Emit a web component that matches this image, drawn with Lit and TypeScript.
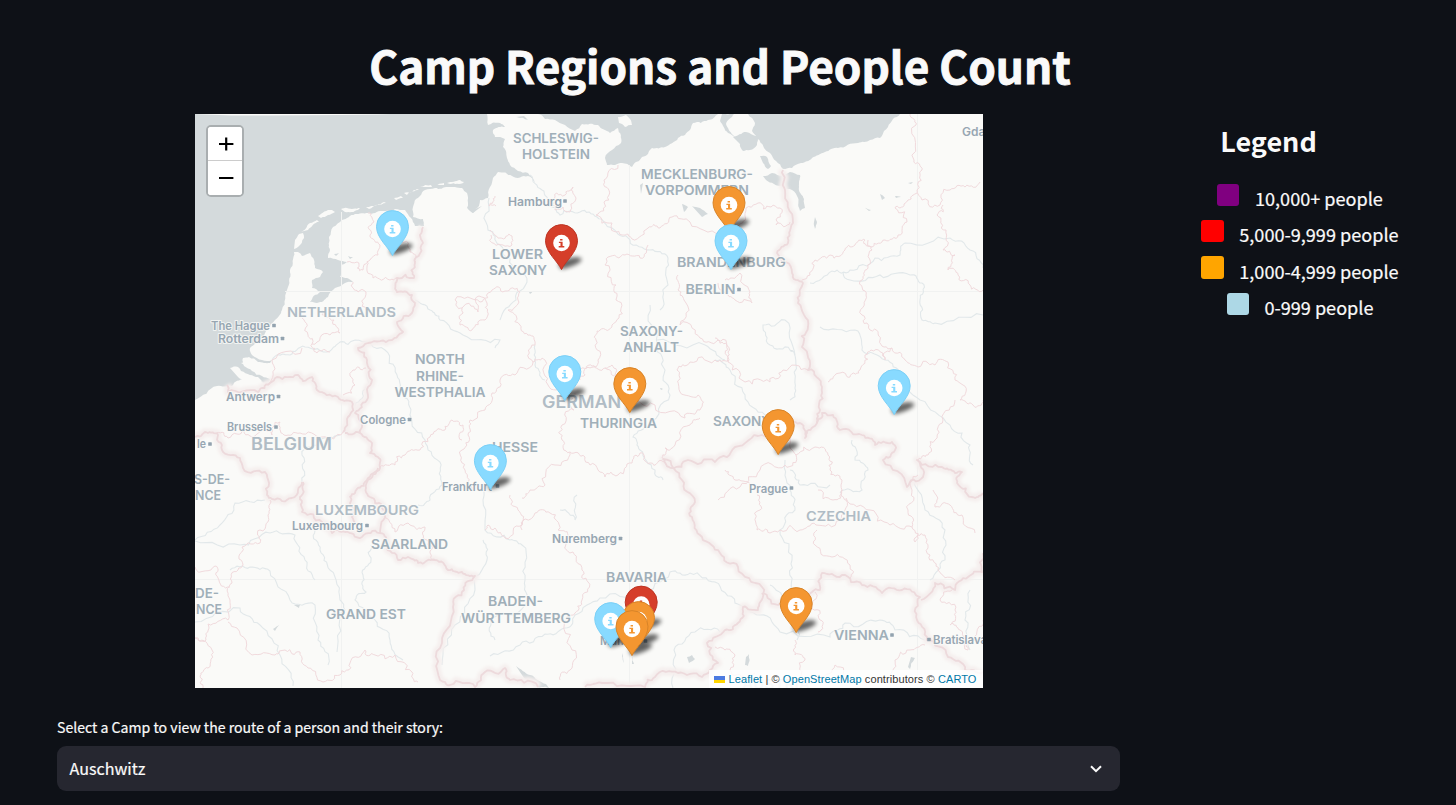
import { LitElement, html, svg, css } from "lit";
import { customElement } from "lit/decorators.js";

type Pt = [number, number];

// Deterministic midpoint displacement gives lines a natural, uneven course.
function rough(src: string, amp: number, seed = 7, close = false): string {
  const n = src.trim().split(/[\s,]+/).map(Number);
  let pts: Pt[] = [];
  for (let i = 0; i < n.length; i += 2) pts.push([n[i], n[i + 1]]);
  let s = seed;
  const rnd = () => {
    s = (s * 16807) % 2147483647;
    return s / 2147483647 - 0.5;
  };
  for (let k = 0; k < 5; k++) rnd();
  for (let pass = 0; pass < 3; pass++) {
    const out: Pt[] = [];
    for (let i = 0; i < pts.length - 1; i++) {
      const [ax, ay] = pts[i];
      const [bx, by] = pts[i + 1];
      out.push(pts[i]);
      const d = Math.hypot(bx - ax, by - ay);
      if (d > 3) {
        const k = rnd() * Math.min(d, 14) * amp;
        out.push([(ax + bx) / 2 - ((by - ay) / d) * k, (ay + by) / 2 + ((bx - ax) / d) * k]);
      }
    }
    out.push(pts[pts.length - 1]);
    pts = out;
  }
  return "M" + pts.map((p) => p[0].toFixed(1) + " " + p[1].toFixed(1)).join("L") + (close ? "Z" : "");
}

const WATER = [
  "195,114 487,114 488,125 500,123 505,127 493,130 495,137 505,139 503,147 507,158 510,165 518,171 528,173 535,182 528,176 512,176 498,172 493,178 490,187 488,198 480,200 479,206 473,213 467,208 468,203 467,193 462,188 448,187 435,188 425,190 420,196 416,199 413,207 413,217 423,219 424,226 415,226 411,218 405,210 395,209 382,211 368,213 355,214 342,220 333,227 329,237 330,250 328,258 338,260 347,262 341,265 340,277 353,282 345,283 335,288 328,297 317,303 310,302 320,292 312,288 312,280 320,277 323,272 315,268 314,260 310,253 302,256 298,252 294,252 290,270 288,287 282,310 275,320 262,338 250,348 252,355 262,360 272,360 270,363 258,362 249,357 243,358 244,366 252,371 262,376 270,379 268,384 256,380 244,378 232,386 217,386 195,400",
  "538,114 545,119 555,120 565,125 575,131 582,124 598,125 610,133 618,128 621,143 612,150 605,158 607,165 615,165 622,163 632,167 642,157 652,148 665,147 678,138 685,135 693,123 708,120 718,114",
  "748,114 755,123 752,131 757,138 764,148 770,153 776,161 783,169 792,168 801,163 812,158 825,152 838,148 858,143 870,140 880,138 884,131 888,127 893,119 900,114",
  "733,137 746,132 757,136 757,145 750,150 743,151 740,144",
  "722,114 734,114 726,124 733,135 738,140 728,133 720,121",
  "763,176 772,173 783,176 790,172 800,175 799,187 804,199 805,208 800,211 798,198 792,190 783,186 774,184 766,180",
  "760,156 767,157 771,166 768,169 763,163",
];
const ISLANDS = [
  "295,240 299,234 303,233 304,238 298,247 294,249",
  "300,232 310,223 317,220 319,222 308,230",
  "318,216 332,210 335,212 321,218",
  "341,209 347,208 360,208 358,210 345,212",
  "366,207 377,205 384,202 386,203 369,209",
  "394,198 401,196 403,198 396,200",
  "404,193 417,189 419,190 407,195",
  "420,187 431,185 432,187",
  "435,185 444,183 444,185",
  "447,183 460,180 464,182 450,184",
  "618,117 626,115 632,125 625,127 619,123",
  "230,368 238,367 241,371 250,375 258,377 263,382 255,382 246,380 238,377",
  "241,363 249,362 258,367 268,373 267,375 256,371",
];
const LAKES = [
  "482,206 468,209 473,213", "682,204 688,207 684,212", "692,206 700,208 708,214 702,217",
  "334,254 339,253 336,256", "348,256 353,257 350,259", "516,117 528,120 524,116",
  "640,185 643,183 641,194", "815,217 817,222 815,229 814,222", "863,206 871,210 869,211", "880,194 885,198 882,200",
  "895,196 901,197 896,198", "908,183 913,182 911,184", "516,666 530,675 546,684 549,688 534,686 524,678",
  "687,657 692,655 695,659 689,663", "294,605 300,605 299,608", "273,629 281,624 275,631",
  "911,657 915,658 910,669 908,667", "746,657 749,654 748,666 745,665", "660,388 663,389 661,390", "790,350 793,350 791,352",
  "529,292 533,291 530,294", "623,653 624,663 622,656", "632,656 634,664 632,664",
];
const COUNTRY = [
  "423,227 423,243 415,263 414,278 397,278 397,292 412,295 415,303 412,313 397,322 403,332 392,340 368,343 358,348 367,360 372,380 367,400 355,413 362,425 360,433 345,433",
  "227,385 228,392 258,392 270,383 277,377 298,375 303,381 312,377 317,390 338,397 352,402 348,417 343,432",
  "360,433 372,443 370,453 378,457 380,468 367,482 370,497 375,503 387,512 380,533 362,537 345,532 332,533 322,522 302,512 300,497 303,482",
  "378,468 365,482 355,493 350,503 352,517 355,523",
  "195,437 205,432 217,433 222,450 240,458 243,468 265,472 267,495 272,499 292,498 298,490 302,482",
  "380,533 387,545 398,560 408,557 418,563 435,560 448,570 462,572 475,576 464,590 453,607 442,643 440,680 450,685 475,687 485,672 505,668 510,680 538,687",
  "585,687 608,683 645,687 655,677 678,673 702,677 718,663 707,643 725,630 738,623 743,607 758,610 762,593",
  "783,170 785,190 793,223 788,243 777,253 792,273 803,283 798,303 808,327 802,347 808,370 822,387 820,410 813,427 805,438 800,423 782,422 762,435 735,447 715,462 688,460 672,468 663,459 682,480 695,502 692,517 702,537 720,553 738,567 762,587 778,605 812,592 820,590 822,573 842,575 862,585 882,593 902,590 920,597 917,620 927,640 948,657 965,670 983,672",
  "817,423 822,413 833,415 840,430 862,435 875,445 892,442 895,450 883,460 907,487 923,477 917,460 942,467 955,473 962,472 957,483 972,497 983,493",
  "921,600 935,583 955,590 968,577 982,572 983,553",
];
const STATE = [
  "368,213 374,222 370,235 380,245 378,255 370,260 367,271 373,278 390,280 397,278",
  "347,262 357,262 363,270 368,261", "353,282 358,292 366,292 366,310", "400,240 410,252 416,262",
  "302,318 308,335 312,344 330,335 340,333 334,320 322,310", "312,344 317,353 330,352", "270,383 272,360 302,348", "343,395 355,385 353,370 366,368",
  "217,433 228,438 237,434 250,436 272,435 280,422 284,435 300,433 322,437 343,432",
  "495,196 489,206 496,206", "490,230 500,238 512,236 512,245 503,245 491,235",
  "618,165 604,180 609,195 604,202 596,215 612,223 622,235 632,239 648,228 660,228 672,217 690,222 720,233 735,225 745,216 758,203 771,207 780,208 776,225 790,222",
  "552,200 565,195 573,187 576,198 570,212 555,210 552,200",
  "648,245 640,258 625,255 608,257 605,265 616,285 616,300 619,318 612,325 600,330 596,340 598,360 586,368 580,380",
  "678,275 678,290 684,300 680,325 700,338 718,340 728,352 730,363 745,382 770,382 783,370 808,370",
  "725,280 732,278 740,273 750,292 752,303 735,300 724,292 718,283",
  "455,300 462,308 460,325 472,330 485,320 487,303 479,296 478,312 462,308",
  "455,300 480,302 492,290 505,291 520,292 518,300 508,310 520,325 530,335 535,345 533,362 515,375 500,380 492,393 485,410 470,420 468,435 462,450 465,470 472,490",
  "533,362 545,360 548,385 556,390 562,380 580,370 592,366 605,368 612,365 618,378",
  "605,368 618,380 625,400 655,405 685,418 700,410 698,395 680,392 677,370 690,362 715,360 728,360",
  "700,418 690,425 675,445 665,448 662,458", "575,393 574,410 562,425 562,440 570,452 585,457 598,470 605,477 618,475 632,463 640,453 650,463 665,462",
  "570,452 555,465 545,485 530,490 522,498", "380,467 395,465 405,455 420,450 430,437 445,430 452,420 463,425 462,440",
  "387,512 395,532 410,525 425,527 427,540 430,553 435,560",
  "510,495 518,510 522,525 505,538 495,528 488,525 485,530", "522,530 535,513 550,513 558,530 568,535 573,552 582,570 588,582 582,600 575,613 567,617",
  "565,620 572,650 570,670 560,680",
  "270,500 268,515 260,530 260,543 242,547 243,565 238,570 232,583 230,600 228,620 208,624 206,640 195,638", "228,622 237,628 252,655 275,655 285,650 300,652 308,668 323,682 340,675 350,663 365,650 375,655 395,655 412,672 418,682",
  "195,567 215,566 218,578 230,587", "195,638 212,650 208,668 200,676 203,688",
  "910,114 916,125 914,160 922,170 917,190 922,200 940,205 950,190 965,187 980,182", "917,193 908,200 900,208 895,208 907,222 898,235 885,240 872,247 865,240 855,245 845,250 830,255 815,260 810,275 802,280",
  "868,240 872,250 868,268 862,280 866,295 862,315 870,330 880,340 892,348 885,360 871,350 865,355 860,370 850,377 840,373 828,382", "943,205 937,215 946,230 943,250 955,255 948,270 958,275 970,285 983,290",
  "892,348 905,360 918,367 935,365 948,362 955,380 963,385 960,400 973,405 983,400", "955,400 943,420 935,440 928,455 918,460",
  "715,338 727,345 728,362", "793,422 790,440 796,455 815,447 828,455 830,470 842,480 842,490 833,500 818,490", "796,455 785,465 760,470 740,487 718,500",
  "757,495 760,510 757,530 770,533 780,530 800,530 816,525 840,520 846,500 842,490", "817,530 815,545 832,557 850,565 850,578",
  "846,498 870,510 890,525 912,527 908,510 912,490 918,475", "912,527 915,542 925,535 930,555 938,570 955,580", "815,592 812,605 820,620 818,632",
  "795,640 795,655 805,660 800,680 820,680 835,665 850,680", "890,675 895,660 910,650 925,645", "952,590 940,600 955,610 950,625 960,630 968,650 975,640 983,620", "933,490 935,507 950,505 962,515 975,533",
  "715,647 725,650 735,655 730,670 745,678 755,673", "725,470 735,480 750,485",
];
const RIVERS = [
  "530,175 542,190 548,205 560,215 580,212 597,217 612,228 630,240 650,250 668,258 668,285 660,310",
  "489,198 488,230 500,245 512,265 525,275 516,300 500,320",
  "272,360 290,355 305,347 330,351 340,342 355,340 385,350 397,375 403,395 410,415 425,440 440,462 442,485 430,500 418,505",
  "345,432 350,415 360,400 370,385 368,365 358,350", "302,482 302,455 320,440 340,435",
  "195,541 240,545 270,533 295,535 305,560 315,580", "195,622 240,608 260,625 280,655 293,686", "230,570 250,567 270,571 290,600 315,605 318,640 328,665",
  "195,540 220,525 235,503 265,500", "315,530 320,550 330,570 340,600 345,610 337,652", "371,545 371,560 363,575 366,592 355,600 375,620 390,640 403,660",
  "483,540 487,560 475,590 455,625 442,665", "484,490 485,530 510,540 522,545 525,580 525,605 490,620 495,640",
  "490,656 520,645 545,634 565,628 575,615 600,598 640,595 670,572 690,573 715,582 735,603 760,615 780,632 830,637 845,623 880,620 895,630 925,640",
  "810,283 832,271 850,270 875,258 900,255 905,243 950,238 970,250 983,268", "843,272 850,280 880,275 910,275 922,283 920,300 922,320 935,323 983,315",
  "715,360 730,370 745,395 765,415 790,430", "795,355 785,320 763,325 770,345 790,350 795,380 790,400",
  "820,327 855,330 862,350 885,360 900,375 920,400 950,425 970,445 973,465", "785,460 790,490 795,510 780,530 792,560 793,590 780,600",
  "852,440 855,460 868,470 862,490 840,493", "915,480 925,510 945,530 945,560 930,580", "790,470 800,485 830,485",
  "650,305 657,345 665,370 670,395 650,425 633,437 640,450 655,470 663,480", "657,340 705,345 725,360", "560,510 575,520 577,495",
  "415,300 430,310 440,320 463,335 500,340 495,348", "535,345 535,365 545,380",
  "673,688 674,650 695,632 720,632", "970,590 965,620 970,650", "770,585 785,600 797,640",
];

interface Label { x: number; y: number; w: number; t: string; c: string; }
const L = (x: number, y: number, w: number, t: string, c = "state"): Label => ({ x, y, w, t, c });
const LABELS: Label[] = [
  L(513, 142.5, 86, "SCHLESWIG-"), L(522, 159, 68, "HOLSTEIN"),
  L(641, 178.5, 112, "MECKLENBURG-"), L(645, 195, 104, "VORPOMMERN"),
  L(492, 259, 51, "LOWER"), L(489, 275, 58, "SAXONY"), L(677, 266.5, 109, "BRANDENBURG"),
  L(685.5, 294, 50, "BERLIN"), L(620, 335.5, 63, "SAXONY-"), L(623, 351.5, 56, "ANHALT"),
  L(415, 364, 50, "NORTH"), L(416, 380.5, 48, "RHINE-"), L(394.5, 397, 91, "WESTPHALIA"),
  L(580, 427.5, 77, "THURINGIA"), L(492, 451.5, 46, "HESSE"), L(713, 425.5, 58, "SAXONY"),
  L(371, 549, 77, "SAARLAND"), L(326, 619, 80, "GRAND EST"), L(606, 582, 61, "BAVARIA"),
  L(488, 606, 55, "BADEN-"), L(461, 622.5, 110, "WÜRTTEMBERG"),
  L(194, 484, 36, "S-DE-"), L(195, 500, 26, "NCE"), L(195, 598, 24, "DE-"), L(196, 614, 26, "NCE"),
  L(834, 639.5, 55, "VIENNA"),
  L(287, 317, 109, "NETHERLANDS", "country"), L(251, 450, 81, "BELGIUM", "country big"),
  L(542, 407.5, 92, "GERMANY", "country big"), L(315, 515, 104, "LUXEMBOURG", "country"), L(806, 520.5, 65, "CZECHIA", "country"),
  L(742, 688.5, 68, "AUSTRIA", "country faint"),
  L(508, 205.5, 54, "Hamburg", "city"), L(211, 330, 59, "The Hague", "city"), L(218, 343, 61, "Rotterdam", "city"),
  L(226, 401, 49, "Antwerp", "city"), L(227, 431, 45, "Brussels", "city"), L(197, 448, 9, "le", "city"),
  L(360, 424, 46, "Cologne", "city"), L(442, 490.5, 50, "Frankfurt", "city"), L(292, 530, 71, "Luxembourg", "city"),
  L(552, 542.5, 65, "Nuremberg", "city"), L(749, 492.5, 39, "Prague", "city"), L(600, 645, 40, "Munich", "city"),
  L(933, 643.5, 54, "Bratislava", "city"), L(962, 136, 44, "Gdańsk", "city"),
];
const DOTS: Pt[] = [
  [565, 201], [274, 325.5], [282.5, 338.5], [278.5, 396.5], [276, 427], [210, 444], [409.5, 419.5], [497.5, 486],
  [367, 525.5], [620.5, 538.5], [791.5, 488], [739, 289.5], [892, 635], [929, 639.5], [645.5, 641],
];

type Tone = "blue" | "red" | "orange";
const PINS: [number, number, Tone][] = [
  [729, 205, "orange"], [392.5, 229, "blue"], [561.5, 243, "red"], [731, 243, "blue"], [564.8, 374, "blue"],
  [629.8, 386, "orange"], [894.2, 388, "blue"], [778.2, 428, "orange"], [490.4, 463, "blue"], [641.2, 604.5, "red"],
  [796.2, 606, "orange"], [638.5, 620, "orange"], [610.7, 621, "blue"], [632, 629, "orange"],
];
const FILL: Record<Tone, string> = { blue: "#88daff", red: "#d53e2a", orange: "#f49630" };
const EDGE: Record<Tone, string> = { blue: "#7bd0f7", red: "#bd3524", orange: "#d88428" };

@customElement("camp-map")
class CampMap extends LitElement {
  static styles = css`
    :host { display: block; position: relative; width: 788px; height: 574px; overflow: hidden; background: #fafaf8; }
    .tiles { display: block; width: 788px; height: 574px; }
    text { font-family: Inter, "Open Sans", sans-serif; stroke: #fafaf8; stroke-width: 2px; stroke-opacity: 0.8; paint-order: stroke; stroke-linejoin: round; }
    .state { font-size: 13px; font-weight: 600; fill: #a0afb9; }
    .country { font-size: 13.5px; font-weight: 600; fill: #b0bcc5; }
    .big { font-size: 17px; }
    .faint { fill: #dde2e5; }
    .city { font-size: 11.5px; font-weight: 600; fill: #97a6b2; }
    .zoom { position: absolute; left: 11px; top: 11px; width: 34px; border: 2px solid #a9aeb0; border-radius: 5px; background: #fff; overflow: hidden; }
    .zoom button { display: grid; place-items: center; width: 34px; height: 34px; border: 0; padding: 0 0 0 2px; background: #fff; }
    .zoom button:first-child { border-bottom: 1px solid #ccc; }
    .credit { position: absolute; right: 0; bottom: 0; display: flex; align-items: center; height: 18px; padding: 0 6px 0 5px; background: rgba(255, 255, 255, 0.8); color: #333; font: 11px/18px "Liberation Sans", Arial, sans-serif; letter-spacing: 0.092px; white-space: pre; }
    .credit a { color: #0078a8; }
    .credit svg { margin-right: 4px; }
  `;

  pin([x, y, tone]: [number, number, Tone]) {
    return svg`<g transform=${`translate(${x} ${y})`}>
      <path d="M0 26C-5 22 -3 19 5 16C13 13 21 14 20 17C19 20 8 25 0 26Z" fill="#000" opacity=".6" filter="url(#soft)"/>
      <path d="M0 26.6C-4 18 -16 9.2 -16 -2.4A16 16 0 0 1 16 -2.4C16 9.2 4 18 0 26.6Z" fill=${FILL[tone]} stroke=${EDGE[tone]} stroke-width="1"/>
      <circle r="8.3" fill="#fff"/>
      <path d="M-1.4 -4H1V-2.4H-1.4ZM-2.6 -1.2H1.1V3.1H2.8V4.4H-2.8V3.1H-1V.1H-2.6Z" fill=${FILL[tone]}/>
    </g>`;
  }

  render() {
    return html`
      <svg class="tiles" viewBox="195 114 788 574">
        <defs>
          <filter id="soft" x="-50%" y="-100%" width="200%" height="300%"><feGaussianBlur stdDeviation="2" /></filter>
          <filter id="glow" filterUnits="userSpaceOnUse" x="195" y="114" width="788" height="574"><feGaussianBlur stdDeviation="1.6" /></filter>
        </defs>
        ${WATER.map((d, i) => svg`<path d=${rough(d, 0.25, 31 + i, true)} fill="#d4dadc"/>`)}
        ${ISLANDS.map((d, i) => svg`<path d=${rough(d, 0.25, 12 + i, true)} fill="#fafaf8"/>`)}
        ${LAKES.map((d, i) => svg`<path d=${rough(d, 0.2, 5 + i, true)} fill="#d4dadc"/>`)}
        <path d="M341.5 212V688M629.5 165V688M917.5 114V688M285 291.5H983M195 579.5H983" stroke="#f1f2f1" fill="none"/>
        ${RIVERS.map((d, i) => svg`<path d=${rough(d, 0.5, 90 + i)} fill="none" stroke="#e2e8ea" stroke-width="1.1"/>`)}
        <g filter="url(#glow)">${COUNTRY.map((d, i) => svg`<path d=${rough(d, 0.5, 50 + i)} fill="none" stroke="#f5efee" stroke-width="8" stroke-linejoin="round"/>`)}</g>
        ${STATE.map((d, i) => svg`<path d=${rough(d, 0.7, 20 + i)} fill="none" stroke="#f1dadd" stroke-width="1"/>`)}
        ${COUNTRY.map((d, i) => svg`<path d=${rough(d, 0.5, 50 + i)} fill="none" stroke="#eddadc" stroke-width="1.8" stroke-linejoin="round"/>`)}
        ${LABELS.map((l) => svg`<text class=${l.c} x=${l.x} y=${l.y} textLength=${l.w} lengthAdjust="spacingAndGlyphs">${l.t}</text>`)}
        ${DOTS.map(([x, y]) => svg`<rect x=${x - 1.8} y=${y - 1.8} width="3.6" height="3.6" rx=".6" fill="#93a3af"/>`)}
        ${PINS.map((p) => this.pin(p))}
      </svg>
      <div class="zoom">
        <button aria-label="Zoom in"><svg width="16" height="16"><path d="M1 8H15.4M8.2 1.5V14.5" stroke="#000" stroke-width="2.2" /></svg></button>
        <button aria-label="Zoom out"><svg width="16" height="16"><path d="M1 8H15.4" stroke="#000" stroke-width="2" /></svg></button>
      </div>
      <div class="credit"><svg width="11" height="7"><path d="M0 0H11V4H0Z" fill="#4c7be1" /><path d="M0 4H11V7H0Z" fill="#ffd500" /></svg><a>Leaflet</a> | © <a>OpenStreetMap</a> contributors © <a>CARTO</a></div>
    `;
  }
}

const TIERS = [
  ["purple", "10,000+ people"], ["red", "5,000-9,999 people"], ["orange", "1,000-4,999 people"], ["lightblue", "0-999 people"],
];

@customElement("app-root")
class AppRoot extends LitElement {
  static styles = css`
    :host { display: block; height: 805px; box-sizing: border-box; overflow: hidden; background: #0e1117; color: #fafafa; font-family: "Noto Sans CJK SC", "Noto Sans", sans-serif; }
    h1 { margin: 0; width: 1440px; height: 114px; padding-top: 35px; box-sizing: border-box; text-align: center; font-size: 44.1px; line-height: 60px; font-weight: 700; white-space: nowrap; -webkit-text-stroke: 0.9px #fafafa; }
    .cols { display: grid; grid-template-columns: 1063px 202px; column-gap: 79px; padding-left: 57px; }
    .map { display: flex; justify-content: center; }
    .legend { text-align: center; }
    h3 { margin: 9px 63px 0 0; font-size: 27px; line-height: 36px; font-weight: 600; }
    ul { list-style: none; margin: 21px 0 0; padding: 0; }
    li { display: flex; justify-content: center; gap: 15.5px; height: 36.4px; font-size: 18.1px; line-height: 36px; white-space: nowrap; -webkit-text-stroke: 0.2px #fafafa; }
    .box { width: 22.4px; height: 22.4px; margin-top: 3.5px; border-radius: 3px; }
    .purple { background: purple; } .red { background: red; } .orange { background: orange; } .lightblue { background: lightblue; }
    .field { width: 1063px; padding: 27px 0 0 57px; }
    label { display: block; height: 24px; margin-bottom: 7px; font-size: 14.1px; line-height: 24px; -webkit-text-stroke: 0.2px #fafafa; }
    .select { display: flex; align-items: center; justify-content: space-between; height: 45px; box-sizing: border-box; padding: 0 17px 0 12.5px; border-radius: 9px; background: #262730; font-size: 16.1px; line-height: 45px; -webkit-text-stroke: 0.2px #fafafa; }
  `;

  render() {
    return html`
      <h1><span>Camp Regions and People Count</span></h1>
      <div class="cols">
        <div class="map"><camp-map></camp-map></div>
        <div class="legend">
          <h3>Legend</h3>
          <ul>${TIERS.map(([c, t]) => html`<li><span class="box ${c}"></span><span>${t}</span></li>`)}</ul>
        </div>
      </div>
      <div class="field">
        <label>Select a Camp to view the route of a person and their story:</label>
        <div class="select"><span>Auschwitz</span><svg width="14" height="10" viewBox="0 0 14 10"><path d="M2 2.2L7 7.2L12 2.2" fill="none" stroke="#fafafa" stroke-width="2" /></svg></div>
      </div>
    `;
  }
}
